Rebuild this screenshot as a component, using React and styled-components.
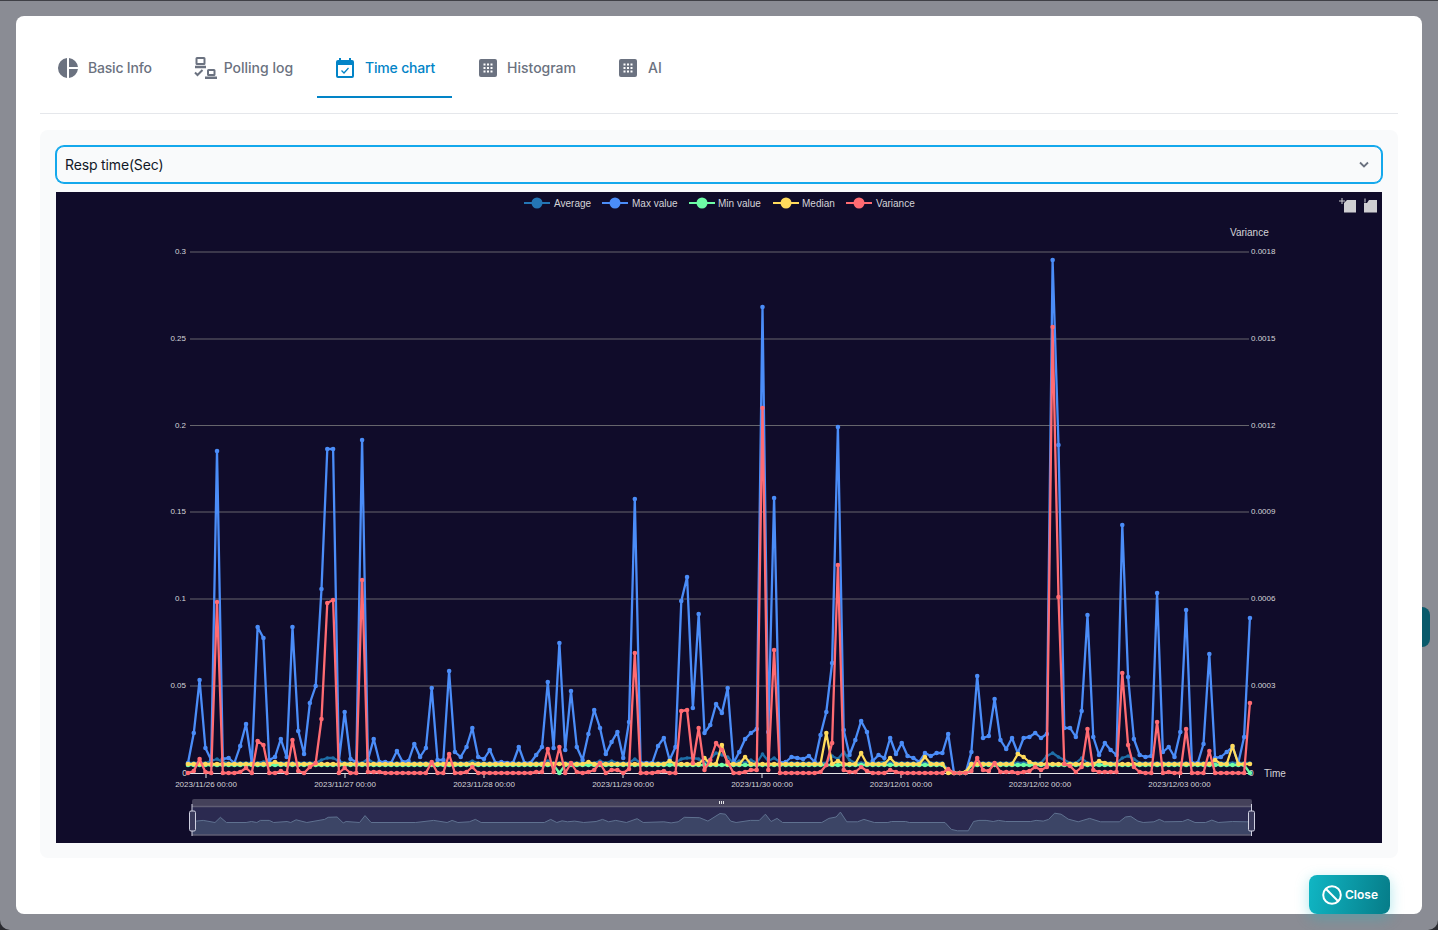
import React from 'react';
import styled, { createGlobalStyle } from 'styled-components';

const Global = createGlobalStyle`
  html, body { margin: 0; padding: 0; background: #2a2b30; }
  body { font-family: Inter, "Liberation Sans", sans-serif; }
`;

const Backdrop = styled.div`
  position: relative;
  width: 1438px;
  height: 930px;
  box-sizing: border-box;
  padding: 16px;
  background: #8a8c94;
  border-top: 1px solid #3f4046;
  border-radius: 0 0 10px 10px;
  overflow: hidden;
`;

const BehindTab = styled.div`
  position: absolute;
  right: 8px;
  top: 606px;
  width: 20px;
  height: 40px;
  border-radius: 8px;
  background: #0a5a6b;
`;

const Modal = styled.div`
  position: relative;
  display: flex;
  flex-direction: column;
  box-sizing: border-box;
  height: 898px;
  margin-top: -1px;
  padding: 23px 24px 0;
  background: #fff;
  border-radius: 8px;
`;

const Tabs = styled.div`
  display: flex;
  padding-bottom: 15px;
  border-bottom: 1px solid #e5e7eb;
`;

const Tab = styled.div`
  display: flex;
  align-items: center;
  gap: ${p => p.$gap || 10}px;
  height: 59px;
  box-sizing: border-box;
  padding: ${p => p.$pad || '0 16px'};
  font-size: 14px;
  font-weight: 500;
  letter-spacing: ${p => p.$ls || 0}px;
  color: ${p => (p.$active ? '#0284c7' : '#6b7280')};
  border-bottom: 2px solid ${p => (p.$active ? '#0284c7' : 'transparent')};
  margin-right: ${p => p.$mr || 0}px;
  white-space: nowrap;
`;

const Panel = styled.div`
  display: flex;
  flex-direction: column;
  gap: 9px;
  margin-top: 16px;
  padding: 16px 16px 15px;
  background: #f9fafb;
  border-radius: 8px;
`;

const Select = styled.div`
  display: flex;
  align-items: center;
  justify-content: space-between;
  box-sizing: border-box;
  height: 37px;
  padding: 0 11px 0 8px;
  border: 1px solid #14a8ec;
  box-shadow: 0 0 0 1px #14a8ec;
  border-radius: 8px;
  background: #f9fafb;
  font-size: 14px;
  letter-spacing: -0.15px;
  color: #111827;
`;

const ChartBox = styled.svg`
  display: block;
  width: 1326px;
  height: 651px;
  background: #100c2a;
`;

const Footer = styled.div`
  display: flex;
  justify-content: flex-end;
  padding: 17px 8px 0 0;
`;

const CloseButton = styled.button`
  display: flex;
  align-items: center;
  gap: 3px;
  width: 81px;
  height: 39px;
  box-sizing: border-box;
  padding: 0 0 0 13px;
  border: none;
  border-radius: 8px;
  color: #fff;
  font-family: inherit;
  font-size: 12px;
  font-weight: 600;
  background: linear-gradient(100deg, #10b6c4, #067c88);
  box-shadow: 0 4px 14px rgba(20, 184, 198, 0.35);
`;

const maxV = [10,40,93,25,13,322,14,15,10,27,49,10,146,135,13,16,34,16,146,42,19,70,87,184,324,324,12,61,14,11,333,13,34,11,
11,10,22,11,12,29,16,25,85,13,13,102,21,16,26,45,16,14,23,10,11,10,10,26,10,10,18,26,91,25,130,23,82,26,13,39,63,45,19,31,41,15,51,274,10,10,10,27,35,13,26,172,196,
65,159,40,48,69,60,85,10,21,34,40,44,466,41,275,10,11,16,15,14,17,11,38,61,110,346,43,18,33,52,41,12,18,15,35,19,30,17,15,11,20,17,20,20,39,0,0,0,
21,97,35,37,74,33,24,35,20,35,36,40,35,39,513,328,45,45,36,62,158,36,18,30,23,18,248,96,34,18,16,17,180,21,26,16,41,163,10,10,29,119,15,16,21,26,10,36,155];

const zero = n => Array(n).fill(0);
const variance = [0,2,14,1,0,171,0,0,0,1,5,0,32,28,0,0,2,0,33,2,0,6,10,54,170,173,0,5,0,0,193,1,1,1,
...zero(8),11,0,0,19,0,0,1,6,...zero(10),1,1,24,1,26,0,10,1,0,1,3,10,0,3,3,0,4,120,0,0,0,1,2,0,0,62,63,
10,45,3,13,30,23,11,0,0,1,3,3,365,3,123,...zero(7),1,8,30,208,3,1,1,6,2,0,0,0,3,1,0,0,0,0,0,0,0,0,4,0,0,0,2,15,
3,2,10,1,1,1,0,1,2,6,3,6,446,176,9,7,1,6,44,3,1,1,1,1,100,28,6,1,0,0,51,0,1,0,0,44,0,0,0,22,0,0,0,0,0,0,70];

const medianBumps = {15:11,69:11,83:12,89:15,92:28,96:16,110:40,112:12,116:20,121:15,127:16,131:0,132:0,133:0,134:1,143:19,144:16,145:11,157:12,158:10,177:13,180:27};
const avgBumps = {4:12,5:14,6:11,13:11,14:11,23:13,24:15,25:15,26:12,31:14,49:12,62:12,71:12,73:12,77:14,85:14,86:15,87:15,88:14,90:14,91:20,92:18,93:16,95:12,97:13,99:19,100:12,101:15,102:11,111:17,112:14,113:21,114:13,120:11,131:3,132:0,133:0,134:1,148:17,149:20,150:16,151:13,154:15,161:15,162:17,163:14};
const N = 184;
const X = i => 132 + i * 5.803;
const BASE = 581;
const median = Array.from({ length: N }, (_, i) => (i in medianBumps ? medianBumps[i] : 9));
const minV = Array.from({ length: N }, (_, i) => (i === 64 || i === 183 || (i >= 132 && i <= 134) ? 0 : i === 131 ? 2 : 8));
const avg = Array.from({ length: N }, (_, i) => (i in avgBumps ? avgBumps[i] : 10));

const toPts = a => a.map((h, i) => `${X(i).toFixed(1)},${BASE - h}`).join(' ');

const Series = ({ data, color, r = 2.3, w = 2.3 }) => (
  <g>
    <polyline points={toPts(data)} fill="none" stroke={color} strokeWidth={w} strokeLinejoin="round" />
    {data.map((h, i) => <circle key={i} cx={X(i)} cy={BASE - h} r={r} fill={color} />)}
  </g>
);

const z9 = [[45,90],[65,88],[98,94],[113,79],[130,94],[185,94],[200,91],[215,94],[225,88],[250,88],[262,94],[300,91],[310,94],[325,86],[355,94],[405,85],[415,79],[440,78],[457,95],[465,91],[503,94],[518,74],[535,94],[660,94],[710,88],[748,94],[762,88],[778,94],[810,92],[827,85],[843,94],[1020,94],[1038,85],[1055,94],[1070,89],[1085,92],[1105,90],[1130,94],[1165,91],[1183,85],[1200,92],[1220,88],[1250,94],[1280,83],[1297,94],[1355,92],[1375,95],[1395,92],[1412,79],[1455,80],[1478,90]];
const z10 = [[0,68],[15,70],[30,90],[45,94],[85,88],[110,88],[127,70],[143,91],[160,82],[175,94],[285,94],[305,82],[325,78],[337,64],[355,92],[385,92],[403,85],[432,94],[470,94],[480,91],[520,91],[530,94],[630,94],[648,114],[665,118],[695,118],[710,91],[725,88],[745,88],[765,91],[780,88],[800,91],[870,91],[885,88],[905,90],[920,85],[937,67],[955,70],[975,84],[1003,92],[1035,82],[1065,92],[1118,92],[1135,78],[1150,76],[1170,90],[1185,94],[1215,92],[1230,85],[1245,92],[1295,91],[1310,85],[1330,94],[1360,94],[1377,87],[1395,94],[1435,91],[1475,92]];
const shadow = [
  ...z9.map(([x, y]) => [180 + x / 2.8 - 56, 790 + y / 2.89 - 192]),
  ...z10.map(([x, y]) => [720 + x / 2.8 - 56, 790 + y / 2.89 - 192]),
];
const shadowLine = shadow.map(([x, y]) => `${x.toFixed(1)},${y.toFixed(1)}`).join(' ');

const yLines = [
  { y: 60, l: '0.3', r: '0.0018' },
  { y: 147, l: '0.25', r: '0.0015' },
  { y: 233.5, l: '0.2', r: '0.0012' },
  { y: 320, l: '0.15', r: '0.0009' },
  { y: 407, l: '0.1', r: '0.0006' },
  { y: 494, l: '0.05', r: '0.0003' },
];
const ticks = [
  [150, '2023/11/26 00:00'], [289, '2023/11/27 00:00'], [428, '2023/11/28 00:00'], [567, '2023/11/29 00:00'],
  [706, '2023/11/30 00:00'], [845, '2023/12/01 00:00'], [984, '2023/12/02 00:00'], [1123.5, '2023/12/03 00:00'],
];
const legend = [
  [468, '#2476b5', 'Average', 498],
  [546, '#4b8df8', 'Max value', 576],
  [633, '#6dfca6', 'Min value', 662],
  [717, '#ffdb5c', 'Median', 746],
  [790, '#ff6b72', 'Variance', 820],
];
const T = { fill: '#d4d4d8', fontFamily: '"Liberation Sans", Arial, sans-serif' };

const Chart = () => (
  <ChartBox viewBox="0 0 1326 651">
    {legend.map(([x, c, name, tx]) => (
      <g key={name}>
        <line x1={x} x2={x + 26} y1={11} y2={11} stroke={c} strokeWidth="2" />
        <circle cx={x + 13} cy={11} r={5.5} fill={c} />
        <text x={tx} y={15} fontSize="10" {...T}>{name}</text>
      </g>
    ))}
    <g fill="#cfcfd2">
      <path d="M1291 8 H1300 V20.500 H1288 V11 Z" />
      <path d="M1313 8 H1321 V20.500 H1308 V11 L1311 11 Z" />
    </g>
    <path d="M1286 6v6M1283 9h6M1309 6.500v4" stroke="#cfcfd2" strokeWidth="1" fill="none" />
    <text x="1174" y="44" fontSize="10" {...T}>Variance</text>
    {yLines.map(l => (
      <g key={l.y}>
        <line x1="134" x2="1193" y1={l.y} y2={l.y} stroke="#66656c" strokeWidth="1" />
        <text x="130" y={l.y + 2} textAnchor="end" fontSize="8" {...T}>{l.l}</text>
        <text x="1195" y={l.y + 2} fontSize="8" {...T}>{l.r}</text>
      </g>
    ))}
    <line x1="132" x2="1194" y1="581.500" y2="581.500" stroke="#e4e4e7" strokeWidth="1" />
    <text x="131" y="584" textAnchor="end" fontSize="8.500" {...T}>0</text>
    <text x="1193" y="584" fontSize="8.500" {...T}>0</text>
    <text x="1208" y="585" fontSize="10" {...T}>Time</text>
    {ticks.map(([x, s]) => (
      <g key={s}>
        <line x1={x} x2={x} y1="581" y2="586" stroke="#e4e4e7" strokeWidth="1" />
        <text x={x} y="595" textAnchor="middle" fontSize="8" {...T}>{s}</text>
      </g>
    ))}
    <Series data={avg} color="#1f6fa8" r={1.8} />
    <Series data={maxV} color="#4b8df8" />
    <Series data={minV} color="#6dfca6" />
    <Series data={median} color="#ffdb5c" />
    <Series data={variance} color="#ff6b72" />

    <rect x="136" y="607" width="1060" height="36" rx="2" fill="#44415a" />
    <rect x="136" y="614" width="1060" height="29" fill="#2b2a50" />
    <polygon points={`136,643 136,${shadow[0][1]} ${shadowLine} 1196,${shadow[shadow.length - 1][1]} 1196,643`} fill="#3c4566" />
    <polyline points={`136,${shadow[0][1]} ${shadowLine} 1196,${shadow[shadow.length - 1][1]}`} fill="none" stroke="#5f7190" strokeWidth="1" />
    <line x1="136" x2="1196" y1="614.500" y2="614.500" stroke="#5f5e74" strokeWidth="1.500" />
    <line x1="136" x2="1196" y1="643" y2="643" stroke="#5f5e74" strokeWidth="1.500" />
    <g stroke="#cfd0e0" strokeWidth="1" fill="#3a3a5c">
      <line x1="136" x2="136" y1="612" y2="644" />
      <rect x="133.500" y="619" width="6" height="20" rx="1.500" />
      <line x1="1195.500" x2="1195.500" y1="612" y2="644" />
      <rect x="1192.500" y="619" width="6" height="20" rx="1.500" />
    </g>
    <g fill="#e4e4e7">
      <rect x="663" y="609" width="1" height="3" />
      <rect x="665" y="609" width="1" height="3" />
      <rect x="667" y="609" width="1" height="3" />
    </g>
  </ChartBox>
);

const PieIcon = () => (
  <svg width="20" height="20" viewBox="0 0 20 20" fill="currentColor">
    <path d="M9 0.050 A10 10 0 0 0 9 19.950 Z" />
    <path d="M11 0.050 A10 10 0 0 1 19.950 9 H11 Z" />
    <path d="M11 11 H19.950 A10 10 0 0 1 11 19.950 Z" />
  </svg>
);
const PollIcon = () => (
  <svg width="23" height="22" viewBox="0 0 23 22" fill="none" stroke="currentColor" strokeWidth="2">
    <rect x="2.500" y="1" width="8" height="6" rx="0.500" />
    <path d="M1 10h11" strokeWidth="2.400" />
    <path d="M1 15.500l2.500 2.500 5-5" />
    <rect x="14" y="13" width="6.500" height="5" rx="0.500" />
    <path d="M11 20.800h12" strokeWidth="2.400" />
  </svg>
);
const CalIcon = () => (
  <svg width="18" height="20" viewBox="0 0 18 20" fill="none">
    <path d="M2 2h14a2 2 0 0 1 2 2v14a2 2 0 0 1-2 2H2a2 2 0 0 1-2-2V4a2 2 0 0 1 2-2z M2 7v11h14V7z" fill="currentColor" fillRule="evenodd" />
    <rect x="3" y="0" width="2" height="4" fill="currentColor" />
    <rect x="13" y="0" width="2" height="4" fill="currentColor" />
    <path d="M5.500 12.500l2.500 2.500 4.500-5" stroke="currentColor" strokeWidth="1.300" />
  </svg>
);
const GridIcon = () => (
  <svg width="18" height="18" viewBox="0 0 18 18">
    <rect width="18" height="18" rx="2" fill="currentColor" />
    {[4.500, 8, 11.500].flatMap(x => [4.500, 8, 11.500].map(y => <rect key={`${x}-${y}`} x={x} y={y} width="2" height="2" fill="#fff" />))}
  </svg>
);
const Chevron = () => (
  <svg width="12" height="8" viewBox="0 0 12 8" fill="none" stroke="#6b7280" strokeWidth="1.800">
    <path d="M2 1.500L6 5.500 10 1.500" />
  </svg>
);
const BanIcon = () => (
  <svg width="20" height="20" viewBox="0 0 20 20" fill="none" stroke="#fff" strokeWidth="2">
    <circle cx="10" cy="10" r="8.800" />
    <path d="M3.800 3.800L16.200 16.200" />
  </svg>
);

export default function App() {
  return (
    <>
      <Global />
      <Backdrop>
        <BehindTab />
        <Modal>
          <Tabs>
            <Tab $pad="0 16px 0 18px" $mr={10} $ls={-0.2}><PieIcon />Basic Info</Tab>
            <Tab $gap={7} $mr={8}><PollIcon />Polling log</Tab>
            <Tab $active $gap={11} $pad="0 17px 0 19px" $mr={11} $ls={-0.2}><CalIcon />Time chart</Tab>
            <Tab $mr={11}><GridIcon />Histogram</Tab>
            <Tab $gap={11}><GridIcon />AI</Tab>
          </Tabs>
          <Panel>
            <Select>Resp time(Sec)<Chevron /></Select>
            <Chart />
          </Panel>
          <Footer>
            <CloseButton><BanIcon />Close</CloseButton>
          </Footer>
        </Modal>
      </Backdrop>
    </>
  );
}
